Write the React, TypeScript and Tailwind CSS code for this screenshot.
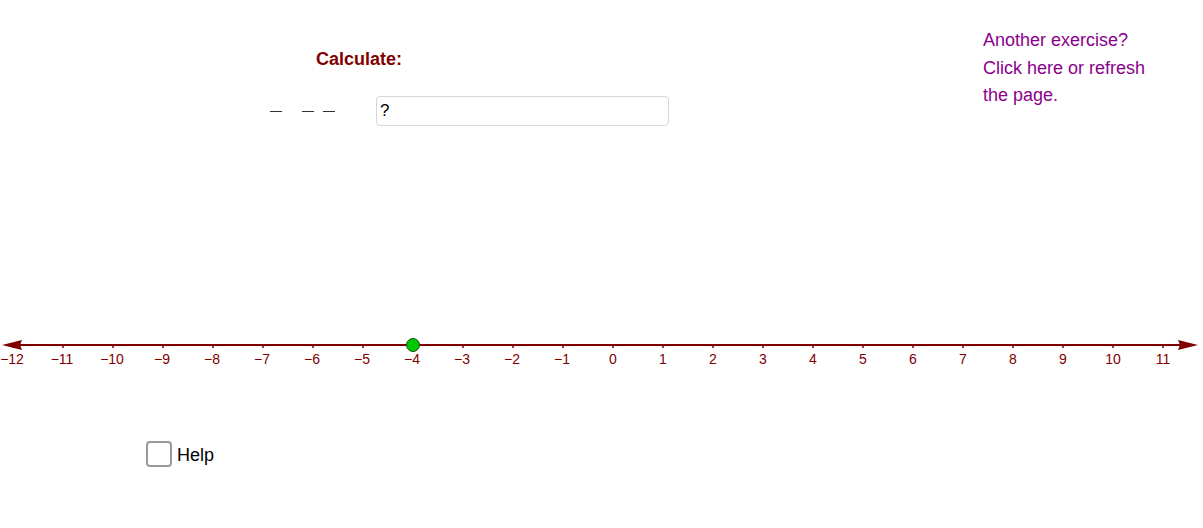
import React from 'react'

const AXIS = '#800000'
const ZERO_X = 613
const UNIT = 50
const AXIS_Y = 345

const ticks = Array.from({ length: 24 }, (_, i) => i - 12)

function NumberLine() {
  return (
    <svg className="absolute left-0 top-0" width={1203} height={528} aria-hidden="true">
      <line x1={14} y1={AXIS_Y} x2={1186} y2={AXIS_Y} stroke={AXIS} strokeWidth={2} />
      <polygon points={`2,${AXIS_Y} 22,${AXIS_Y - 5} 20,${AXIS_Y} 22,${AXIS_Y + 5}`} fill={AXIS} />
      <polygon points={`1198,${AXIS_Y} 1178,${AXIS_Y - 5} 1180,${AXIS_Y} 1178,${AXIS_Y + 5}`} fill={AXIS} />
      {ticks.map((v) => {
        const x = ZERO_X + v * UNIT
        return (
          <g key={v}>
            <line x1={x} y1={AXIS_Y} x2={x} y2={AXIS_Y + 3} stroke={AXIS} strokeWidth={1.5} />
            <text
              x={v < 0 ? x - 1 : x}
              y={AXIS_Y + 19}
              textAnchor="middle"
              fill={AXIS}
              fontSize={14}
              fontFamily="'Liberation Sans', Arial, sans-serif"
            >
              {v < 0 ? `\u2212${Math.abs(v)}` : v}
            </text>
          </g>
        )
      })}
      <circle cx={413} cy={AXIS_Y} r={6.5} fill="#00c800" stroke="#1a4d1a" strokeWidth={1} />
    </svg>
  )
}

export default function App() {
  return (
    <div className="relative h-[528px] w-[1203px] overflow-hidden bg-white font-['Liberation_Sans',Arial,sans-serif]">
      <NumberLine />

      <div className="absolute left-[270px] top-[47px] flex flex-col">
        <div className="ml-[46px] text-[18px] font-bold leading-[24px] text-[#800000]">Calculate:</div>
        <div className="mt-[25px] flex h-[30px] items-center">
          <span className="h-[1px] w-[12px] bg-[#333]" />
          <span className="ml-[20px] h-[1px] w-[12px] bg-[#333]" />
          <span className="ml-[9px] h-[1px] w-[12px] bg-[#333]" />
          <div className="ml-[41px] flex h-[30px] w-[293px] items-center rounded-[4px] border border-[#d6d6d6] bg-white pl-[3px] text-[17px] text-black">
            ?
          </div>
        </div>
      </div>

      <div className="absolute left-[983px] top-[27px] text-[18px] leading-[27.5px] text-[#8b008b]">
        <div>Another exercise?</div>
        <div>Click here or refresh</div>
        <div>the page.</div>
      </div>

      <label className="absolute left-[146px] top-[441px] flex items-start gap-[5px]">
        <span className="h-[26px] w-[26px] rounded-[4px] border-2 border-[#9a9a9a] bg-white" />
        <span className="pt-[1px] text-[18px] leading-[26px] text-black">Help</span>
      </label>
    </div>
  )
}
